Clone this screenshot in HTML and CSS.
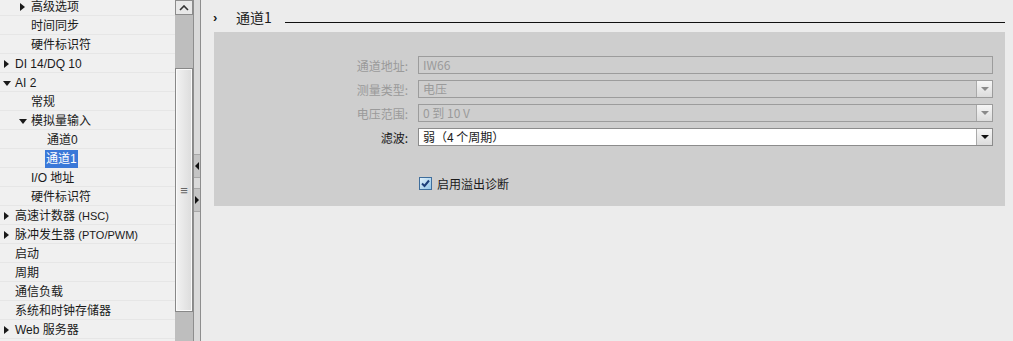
FILE: index.html
```html
<!DOCTYPE html>
<html lang="zh-CN">
<head>
  <meta charset="UTF-8">
  <title>通道1 – 属性</title>
  <link rel="stylesheet" href="styles.css">
</head>
<body>
  <div class="tree">
    <div class="row lvl1"><span class="tri right"></span>高级选项</div>
    <div class="row lvl1">时间同步</div>
    <div class="row lvl1">硬件标识符</div>
    <div class="row lvl0"><span class="tri right"></span>DI 14/DQ 10</div>
    <div class="row lvl0"><span class="tri down"></span>AI 2</div>
    <div class="row lvl1">常规</div>
    <div class="row lvl1"><span class="tri down"></span>模拟量输入</div>
    <div class="row lvl2">通道0</div>
    <div class="row lvl2"><span class="selected">通道1</span></div>
    <div class="row lvl1">I/O 地址</div>
    <div class="row lvl1">硬件标识符</div>
    <div class="row lvl0"><span class="tri right"></span>高速计数器 <span class="small">(HSC)</span></div>
    <div class="row lvl0"><span class="tri right"></span>脉冲发生器 <span class="small">(PTO/PWM)</span></div>
    <div class="row lvl0">启动</div>
    <div class="row lvl0">周期</div>
    <div class="row lvl0">通信负载</div>
    <div class="row lvl0">系统和时钟存储器</div>
    <div class="row lvl0"><span class="tri right"></span>Web 服务器</div>
  </div>

  <div class="scrollbar">
    <div class="scroll-btn">
      <svg width="10" height="6" viewBox="0 0 10 6"><path d="M1 5 L5 1 L9 5" fill="none" stroke="#333" stroke-width="1.6"/></svg>
    </div>
    <div class="scroll-gap"></div>
    <div class="thumb"><span class="grip">≡</span></div>
  </div>

  <div class="splitter">
    <div class="split-tab top"><span class="arr left"></span></div>
    <div class="split-tab bottom"><span class="arr right"></span></div>
  </div>

  <div class="main">
    <div class="section-head">
      <span class="chev">›</span>
      <span class="head-title">通道1</span>
      <span class="head-line"></span>
    </div>

    <div class="panel">
      <div class="field">
        <label class="off">通道地址:</label>
        <div class="box off">IW66</div>
      </div>
      <div class="field">
        <label class="off">测量类型:</label>
        <div class="box off">电压<span class="drop"><span class="down-arr"></span></span></div>
      </div>
      <div class="field">
        <label class="off">电压范围:</label>
        <div class="box off">0 到 10 V<span class="drop"><span class="down-arr"></span></span></div>
      </div>
      <div class="field">
        <label>滤波:</label>
        <div class="box">弱（4 个周期）<span class="drop"><span class="down-arr on"></span></span></div>
      </div>

      <div class="check-row">
        <svg class="check" width="13" height="13" viewBox="0 0 13 13">
          <defs>
            <linearGradient id="cb" x1="0" y1="0" x2="1" y2="1">
              <stop offset="0" stop-color="#e4f2fb"/>
              <stop offset="1" stop-color="#8fc4e8"/>
            </linearGradient>
          </defs>
          <rect x="0.5" y="0.5" width="12" height="12" fill="url(#cb)" stroke="#3f6e9c"/>
          <path d="M3 6.5 L5.5 9 L10 3.5" fill="none" stroke="#1d3f7a" stroke-width="2"/>
        </svg>
        <span>启用溢出诊断</span>
      </div>
    </div>
  </div>
</body>
</html>
```
FILE: styles.css
```css
html, body {
  margin: 0;
  padding: 0;
  height: 100%;
  overflow: hidden;
}
body {
  display: flex;
  font-family: "Liberation Sans", "Noto Sans CJK SC", sans-serif;
  font-size: 12px;
  color: #1a1a1a;
  background-color: #ececec;
}

/* project tree */
.tree {
  width: 175px;
  flex-shrink: 0;
  background-color: #f0f0f0;
  margin-top: -3px;
}
.row {
  height: 19px;
  line-height: 20px;
  box-sizing: border-box;
  border-bottom: 1px solid #e6e6e6;
  position: relative;
  white-space: nowrap;
}
.lvl0 { padding-left: 15px; }
.lvl1 { padding-left: 31px; }
.lvl2 { padding-left: 47px; }
.small {
  font-size: 11px;
}
.tri {
  position: absolute;
  top: 6px;
  width: 0;
  height: 0;
}
.tri.right {
  border-top: 4px solid transparent;
  border-bottom: 4px solid transparent;
  border-left: 5px solid #1a1a1a;
  margin-left: -11px;
}
.tri.down {
  top: 8px;
  border-left: 4px solid transparent;
  border-right: 4px solid transparent;
  border-top: 5px solid #1a1a1a;
  margin-left: -12px;
}
.selected {
  background-color: #3a78d8;
  color: white;
  padding: 2px 1px;
  margin-left: -2px;
}

/* vertical scrollbar */
.scrollbar {
  width: 18px;
  flex-shrink: 0;
  background-color: #bebebe;
  display: flex;
  flex-direction: column;
}
.scroll-btn {
  height: 13px;
  border: 1px solid #8c8c8c;
  background-color: #e8e8e8;
  display: flex;
  align-items: center;
  justify-content: center;
}
.scroll-gap {
  height: 53px;
}
.thumb {
  height: 242px;
  border: 1px solid #888;
  box-shadow: inset 0 0 0 1px #fafafa;
  background: linear-gradient(to right, #f2f2f2, #dcdcdc);
  display: flex;
  align-items: center;
  justify-content: center;
}
.grip {
  color: #666;
  font-size: 13px;
  line-height: 1;
}

/* splitter */
.splitter {
  width: 6px;
  flex-shrink: 0;
  border-left: 1px solid #8e8e8e;
  border-right: 1px solid #8e8e8e;
  background-color: #dadada;
  display: flex;
  flex-direction: column;
}
.split-tab {
  height: 22px;
  background-color: #c4c4c4;
  border-top: 1px solid #a8a8a8;
  border-bottom: 1px solid #a8a8a8;
  display: flex;
  align-items: center;
  justify-content: center;
}
.split-tab.top { margin-top: 154px; }
.split-tab.bottom { margin-top: 10px; }
.arr {
  width: 0;
  height: 0;
  border-top: 4px solid transparent;
  border-bottom: 4px solid transparent;
}
.arr.left { border-right: 4px solid #111; }
.arr.right { border-left: 4px solid #111; }

/* right side */
.main {
  flex: 1;
  padding: 7px 8px 0 13px;
}
.section-head {
  display: flex;
  align-items: center;
  height: 20px;
}
.chev {
  font-size: 13px;
  width: 23px;
  margin-left: -1px;
  font-weight: bold;
}
.head-title {
  font-size: 14px;
  font-family: "Noto Sans CJK SC", sans-serif;
}
.head-line {
  flex: 1;
  border-bottom: 1px solid #111;
  margin-left: 13px;
  margin-top: 10px;
}

.panel {
  margin-top: 5px;
  height: 174px;
  box-sizing: border-box;
  background-color: #cecece;
  padding: 24px 12px 0 0;
}
.field {
  display: flex;
  align-items: center;
  gap: 10px;
  margin-bottom: 6px;
}
.field label {
  width: 194px;
  text-align: right;
  font-family: "Noto Sans CJK SC", sans-serif;
  font-size: 12px;
}
.off {
  color: #9a9a9a;
}
.box {
  flex: 1;
  height: 18px;
  line-height: 16px;
  box-sizing: border-box;
  border: 1px solid #8c8c8c;
  background-color: white;
  padding-left: 4px;
  position: relative;
  font-family: "Noto Sans CJK SC", sans-serif;
}
.box.off {
  background-color: #cecece;
  border-color: #9c9c9c;
}
.drop {
  position: absolute;
  right: 0;
  top: 0;
  bottom: 0;
  width: 15px;
  border-left: 1px solid #aaa;
  background: linear-gradient(#f6f6f6, #dcdcdc);
  display: flex;
  align-items: center;
  justify-content: center;
}
.down-arr {
  width: 0;
  height: 0;
  border-left: 4px solid transparent;
  border-right: 4px solid transparent;
  border-top: 4px solid #8a8a8a;
}
.down-arr.on {
  border-top-color: #111;
}

.check-row {
  display: flex;
  align-items: center;
  gap: 5px;
  margin-top: 29px;
  padding-left: 205px;
  font-family: "Noto Sans CJK SC", sans-serif;
}
.check {
  display: block;
}
```
